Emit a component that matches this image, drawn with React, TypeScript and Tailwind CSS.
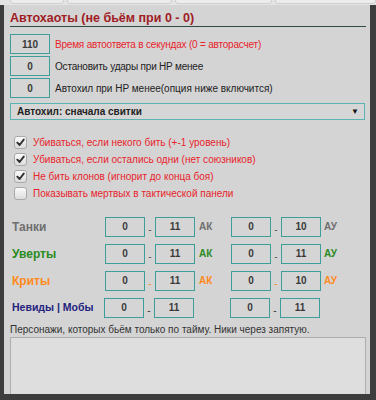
import React from 'react';

const FONT = { fontFamily: '"Liberation Sans", Arial, sans-serif' };

const RANGES = [
  { label: 'Танки', color: 'text-[#6f6f6f]', dash: 'text-[#555]', a: ['0', '11'], b: ['0', '10'], suffix: ['АК', 'АУ'] },
  { label: 'Уверты', color: 'text-[#2a8a1e]', dash: 'text-[#555]', a: ['0', '11'], b: ['0', '11'], suffix: ['АК', 'АУ'] },
  { label: 'Криты', color: 'text-[#ff8a1c]', dash: 'text-[#ff8a1c]', a: ['0', '11'], b: ['0', '10'], suffix: ['АК', 'АУ'] },
];

const CHECKS = [
  { label: 'Убиваться, если некого бить (+-1 уровень)', on: true },
  { label: 'Убиваться, если остались одни (нет союзников)', on: true },
  { label: 'Не бить клонов (игнорит до конца боя)', on: true },
  { label: 'Показывать мертвых в тактической панели', on: false },
];

function Box({ value }: { value: string }) {
  return (
    <div className="flex h-[20px] w-[40px] shrink-0 items-center justify-center border border-[#3e9e9a] bg-[#d5d5d5] text-[10px] font-bold text-[#3a3a3a]">
      {value}
    </div>
  );
}

function Check({ on }: { on: boolean }) {
  return (
    <span className="flex h-[13px] w-[13px] shrink-0 items-center justify-center rounded-[3px] border border-[#a9a9a9] bg-gradient-to-b from-[#fbfbfb] to-[#dcdcdc]">
      {on && (
        <svg width="9" height="9" viewBox="0 0 10 10">
          <path d="M1.5 5.2 L4 7.8 L8.6 1.8" fill="none" stroke="#333" strokeWidth="2.2" strokeLinecap="round" strokeLinejoin="round" />
        </svg>
      )}
    </span>
  );
}

export default function App() {
  return (
    <div className="h-[400px] w-[376px] overflow-hidden bg-[#3d3d3d]" style={FONT}>
      {/* page behind the panel */}
      <div className="flex h-[5px] gap-[3px] overflow-hidden bg-[#e4e4e4] pl-[10px]">
        <div className="-mt-[8px] h-[12px] w-[58px] rounded-[3px] border border-[#cfcfcf] bg-[#ececec]" />
        <div className="-mt-[8px] h-[12px] w-[114px] rounded-[3px] border border-[#cfcfcf] bg-[#ececec]" />
        <div className="-mt-[8px] h-[12px] w-[105px] rounded-[3px] border border-[#cfcfcf] bg-[#ececec]" />
        <div className="-mt-[8px] h-[12px] w-[110px] rounded-[3px] border border-[#cfcfcf] bg-[#ececec]" />
      </div>

      <div className="ml-[4px] flex h-[389px] w-[366px] flex-col overflow-hidden bg-[#d4d4d4] pl-[6px] pr-[4px]">
        <h2 className="mt-[7px] border-b border-[#2f4a44] pb-[1px] text-[12.5px] leading-[13px] font-bold text-[#a01c24]">
          Автохаоты (не бьём при 0 - 0)
        </h2>

        <div className="mt-[7px] flex flex-col gap-[2px] text-[10px] text-[#222]">
          <div className="flex items-center gap-[5px]">
            <Box value="110" />
            <span className="tracking-[-0.2px] text-[#e8232b]">Время автоответа в секундах (0 = авторасчет)</span>
          </div>
          <div className="flex items-center gap-[5px]">
            <Box value="0" />
            <span className="tracking-[-0.2px]">Остановить удары при HP менее</span>
          </div>
          <div className="flex items-center gap-[5px]">
            <Box value="0" />
            <span>Автохил при HP менее(опция ниже включится)</span>
          </div>
        </div>

        <div className="mt-[5px] mr-[1px] flex h-[22px] items-center justify-between border border-[#5ab4b2] bg-[#d6d6d6] pl-[6px] pr-[5px] text-[10px] font-semibold text-[#222]">
          <span>Автохил: сначала свитки</span>
          <span className="text-[8px] text-[#111]">▼</span>
        </div>

        <div className="mt-[14px] flex flex-col pl-[4px]">
          {CHECKS.map((c) => (
            <label key={c.label} className="flex h-[17px] items-center gap-[6px] text-[10px] text-[#e8232b]">
              <Check on={c.on} />
              <span>{c.label}</span>
            </label>
          ))}
        </div>

        <div className="mt-[14px] flex flex-col gap-[6px]">
          {RANGES.map((r) => (
            <div key={r.label} className="flex items-center">
              <span className={`w-[95px] pl-[2px] text-[12px] font-bold ${r.color}`}>{r.label}</span>
              <Box value={r.a[0]} />
              <span className={`w-[10px] pt-[6px] text-center text-[10px] ${r.dash}`}>-</span>
              <Box value={r.a[1]} />
              <span className={`w-[36px] pl-[4px] text-[10px] font-bold ${r.color}`}>{r.suffix[0]}</span>
              <Box value={r.b[0]} />
              <span className={`w-[10px] pt-[6px] text-center text-[10px] ${r.dash}`}>-</span>
              <Box value={r.b[1]} />
              <span className={`pl-[3px] text-[10px] font-bold ${r.color}`}>{r.suffix[1]}</span>
            </div>
          ))}
          <div className="flex items-center">
            <span className="w-[94px] pl-[2px] text-[10.5px] font-bold text-[#23237e]">Невиды | Мобы</span>
            <Box value="0" />
            <span className="w-[10px] pt-[6px] text-center text-[10px] text-[#333]">-</span>
            <Box value="11" />
            <span className="w-[36px]" />
            <Box value="0" />
            <span className="w-[10px] pt-[6px] text-center text-[10px] text-[#333]">-</span>
            <Box value="11" />
          </div>
        </div>

        <p className="mt-[5px] text-[10px] leading-[14px] text-[#333]">
          Персонажи, которых бьём только по тайму. Ники через запятую.
        </p>
        <textarea className="h-[80px] w-full shrink-0 resize-none border border-[#adadad] bg-[#dedede] outline-none" />
      </div>
    </div>
  );
}
